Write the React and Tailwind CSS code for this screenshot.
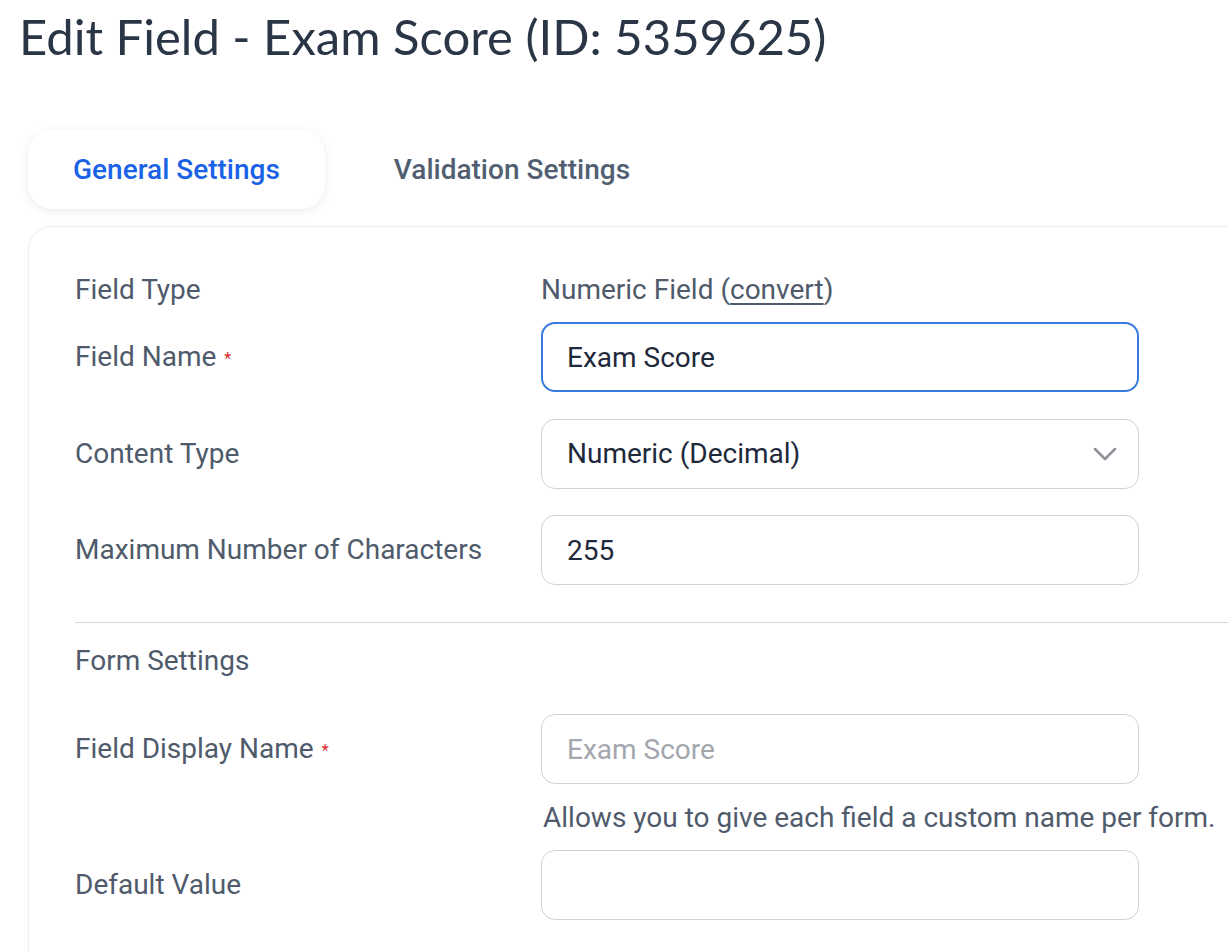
import { useState } from "react";

const Label = ({ children, required }) => (
  <div className="w-[466px] shrink-0 text-[28px] text-[#4f5b6b]">
    {children}
    {required && <span className="ml-2 align-middle text-[16px] text-[#dc2626]">*</span>}
  </div>
);

const Row = ({ label, required, children, className = "" }) => (
  <div className={`flex items-center ${className}`}>
    <Label required={required}>{label}</Label>
    {children}
  </div>
);

const inputShape =
  "w-[598px] h-[70px] rounded-[14px] bg-white text-[28px] text-[#1e293b] outline-none placeholder:text-[#a3a7ad]";
const inputBase = `${inputShape} border border-[#cdd2d8] px-[25px]`;
const inputFocus = `${inputShape} border-2 border-[#3b7be0] px-[24px]`;

const App = () => {
  const [tab, setTab] = useState("general");
  const [name, setName] = useState("Exam Score");
  const [maxChars, setMaxChars] = useState("255");
  const [displayName, setDisplayName] = useState("");
  const [defaultValue, setDefaultValue] = useState("");

  return (
    <div className="min-h-screen w-[1228px] overflow-hidden bg-white font-['Roboto','Liberation_Sans',sans-serif]">
      {/* Title */}
      <h1 className="pl-[19px] pt-[7px] font-['Lato','Liberation_Sans',sans-serif] text-[49px] leading-[58px] text-[#2a3546]">
        Edit Field - Exam Score (ID: 5359625)
      </h1>

      {/* Tabs */}
      <div className="mt-[65px] flex items-center gap-[24px] pl-[28px]">
        <button
          onClick={() => setTab("general")}
          className={`h-[79px] rounded-[24px] px-[45px] text-[28px] font-medium ${
            tab === "general"
              ? "bg-white text-[#1a62e6] shadow-[0_2px_10px_rgba(0,0,0,0.08)]"
              : "text-[#525f73]"
          }`}
        >
          General Settings
        </button>
        <button
          onClick={() => setTab("validation")}
          className={`h-[79px] rounded-[24px] px-[45px] text-[28px] font-medium ${
            tab === "validation"
              ? "bg-white text-[#1a62e6] shadow-[0_2px_10px_rgba(0,0,0,0.08)]"
              : "text-[#525f73]"
          }`}
        >
          Validation Settings
        </button>
      </div>

      {/* Panel */}
      <div className="ml-[28px] mt-[17px] w-[1240px] rounded-tl-[24px] border border-[#eceef0] pb-[40px] pl-[46px] pt-[38px]">
        <Row label="Field Type" className="h-[50px]">
          <div className="text-[28px] text-[#4f5b6b]">
            Numeric Field (<a href="#" className="underline underline-offset-[4px]">convert</a>)
          </div>
        </Row>

        <Row label="Field Name" required className="mt-[7px]">
          <input
            value={name}
            onChange={(e) => setName(e.target.value)}
            className={inputFocus}
          />
        </Row>

        <Row label="Content Type" className="mt-[27px]">
          <div className="relative">
            <select className={`${inputBase} appearance-none`}>
              <option>Numeric (Decimal)</option>
              <option>Numeric (Integer)</option>
            </select>
            <svg
              className="pointer-events-none absolute right-[22px] top-1/2 -translate-y-1/2"
              width="24"
              height="14"
              viewBox="0 0 24 14"
              fill="none"
              stroke="#8b9099"
              strokeWidth="2.5"
              strokeLinecap="round"
              strokeLinejoin="round"
            >
              <path d="M2 2l10 10L22 2" />
            </svg>
          </div>
        </Row>

        <Row label="Maximum Number of Characters" className="mt-[26px]">
          <input
            value={maxChars}
            onChange={(e) => setMaxChars(e.target.value)}
            className={inputBase}
          />
        </Row>

        <div className="mt-[37px] h-px bg-[#d4d7db]" />

        <div className="mt-[20px] text-[28px] leading-[36px] text-[#4f5b6b]">Form Settings</div>

        <Row label="Field Display Name" required className="mt-[35px]">
          <input
            value={displayName}
            onChange={(e) => setDisplayName(e.target.value)}
            placeholder="Exam Score"
            className={inputBase}
          />
        </Row>

        <div className="ml-[468px] mt-[16px] text-[28px] leading-[36px] text-[#4f5b6b]">
          Allows you to give each field a custom name per form.
        </div>

        <Row label="Default Value" className="mt-[14px]">
          <input
            value={defaultValue}
            onChange={(e) => setDefaultValue(e.target.value)}
            className={inputBase}
          />
        </Row>
      </div>
    </div>
  );
};

export default App;
